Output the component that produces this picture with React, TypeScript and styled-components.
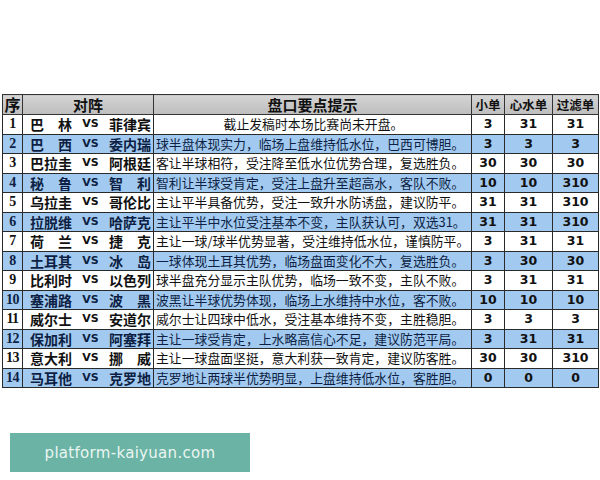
import * as React from 'react';
import styled, { createGlobalStyle } from 'styled-components';

const GlobalStyle = createGlobalStyle`
  html, body {
    margin: 0;
    padding: 0;
    background: #ffffff;
  }
`;

interface IMatch {
  home: string;
  away: string;
  tip: string;
  small: string;
  heart: string;
  filter: string;
}

const Matches: IMatch[] = [
  { home: '巴林', away: '菲律宾', tip: '截止发稿时本场比赛尚未开盘。', small: '3', heart: '31', filter: '31' },
  { home: '巴西', away: '委内瑞', tip: '球半盘体现实力，临场上盘维持低水位，巴西可博胆。', small: '3', heart: '3', filter: '3' },
  { home: '巴拉圭', away: '阿根廷', tip: '客让半球相符，受注降至低水位优势合理，复选胜负。', small: '30', heart: '30', filter: '30' },
  { home: '秘鲁', away: '智利', tip: '智利让半球受肯定，受注上盘升至超高水，客队不败。', small: '10', heart: '10', filter: '310' },
  { home: '乌拉圭', away: '哥伦比', tip: '主让平半具备优势，受注一致升水防诱盘，建议防平。', small: '31', heart: '31', filter: '310' },
  { home: '拉脱维', away: '哈萨克', tip: '主让平半中水位受注基本不变，主队获认可，双选31。', small: '31', heart: '31', filter: '310' },
  { home: '荷兰', away: '捷克', tip: '主让一球/球半优势显著，受注维持低水位，谨慎防平。', small: '3', heart: '31', filter: '31' },
  { home: '土耳其', away: '冰岛', tip: '一球体现土耳其优势，临场盘面变化不大，复选胜负。', small: '3', heart: '30', filter: '30' },
  { home: '比利时', away: '以色列', tip: '球半盘充分显示主队优势，临场一致不变，主队不败。', small: '3', heart: '31', filter: '31' },
  { home: '塞浦路', away: '波黑', tip: '波黑让半球优势体现，临场上水维持中水位，客不败。', small: '10', heart: '10', filter: '10' },
  { home: '威尔士', away: '安道尔', tip: '威尔士让四球中低水，受注基本维持不变，主胜稳胆。', small: '3', heart: '3', filter: '3' },
  { home: '保加利', away: '阿塞拜', tip: '主让一球受肯定，上水略高信心不足，建议防范平局。', small: '3', heart: '31', filter: '31' },
  { home: '意大利', away: '挪威', tip: '主让一球盘面坚挺，意大利获一致肯定，建议防客胜。', small: '30', heart: '30', filter: '310' },
  { home: '马耳他', away: '克罗地', tip: '克罗地让两球半优势明显，上盘维持低水位，客胜胆。', small: '0', heart: '0', filter: '0' },
];

const App: React.FunctionComponent = () => {
  return (
    <Page>
      <GlobalStyle />
      <Table>
        <colgroup>
          <col style={{ width: 20 }} />
          <col style={{ width: 131 }} />
          <col style={{ width: 318 }} />
          <col style={{ width: 33 }} />
          <col style={{ width: 48 }} />
          <col style={{ width: 46 }} />
        </colgroup>
        <thead>
          <tr>
            <HeadCell $size={16}>序</HeadCell>
            <HeadCell $size={15}>对阵</HeadCell>
            <HeadCell $size={15}>盘口要点提示</HeadCell>
            <HeadCell $size={12.5}>小单</HeadCell>
            <HeadCell $size={12.5}>心水单</HeadCell>
            <HeadCell $size={12.5}>过滤单</HeadCell>
          </tr>
        </thead>
        <tbody>
          {Matches.map((m, i) => (
            <Row key={i} $blue={i % 2 === 1}>
              <IndexCell>{i + 1}</IndexCell>
              <TeamCell>
                <Teams>
                  <TeamName>{m.home}</TeamName>
                  <Vs>VS</Vs>
                  <TeamName>{m.away}</TeamName>
                </Teams>
              </TeamCell>
              <TipCell $center={i === 0}>{m.tip}</TipCell>
              <NumCell>{m.small}</NumCell>
              <NumCell>{m.heart}</NumCell>
              <NumCell>{m.filter}</NumCell>
            </Row>
          ))}
        </tbody>
      </Table>
      <SiteBadge>platform-kaiyuan.com</SiteBadge>
    </Page>
  );
};

export default App;

const Page = styled.div`
  width: 600px;
  height: 480px;
  box-sizing: border-box;
  padding: 94px 0 0 2px;
  display: flex;
  flex-direction: column;
  background: #ffffff;
  overflow: hidden;
`;

const Table = styled.table`
  width: 596px;
  table-layout: fixed;
  border-collapse: collapse;
  border: 1px solid #222;
  color: #111;
`;

const HeadCell = styled.th<{ $size: number }>`
  height: 19px;
  padding: 0;
  border: 1px solid #333;
  background: linear-gradient(#d4d4d4, #bdbdbd);
  font-family: "Noto Sans CJK SC", sans-serif;
  font-weight: 700;
  font-size: ${p => p.$size}px;
  line-height: 19px;
  text-align: center;
  color: #111;
  white-space: nowrap;
`;

const Row = styled.tr<{ $blue?: boolean }>`
  background: ${p => (p.$blue ? '#a2c9ef' : '#ffffff')};
  color: ${p => (p.$blue ? '#0d1f44' : '#111')};

  td {
    height: 18.5px;
    padding: 0;
    border: 1px solid #2a2a2a;
    white-space: nowrap;
    overflow: hidden;
  }
`;

const IndexCell = styled.td`
  text-align: center;
  font-family: "Liberation Serif", serif;
  font-weight: 700;
  font-size: 14px;
  line-height: 18px;
  letter-spacing: -0.5px;
`;

const TeamCell = styled.td``;

const Teams = styled.div`
  display: flex;
  align-items: center;
  padding-left: 7px;
  font-family: "Noto Sans CJK SC", sans-serif;
  font-weight: 700;
  font-size: 14px;
  line-height: 18px;
`;

const TeamName = styled.span`
  width: 42px;
  display: inline-block;
  text-align: justify;
  text-align-last: justify;
`;

const Vs = styled.span`
  width: 37px;
  text-align: center;
  font-family: "DejaVu Sans", sans-serif;
  font-size: 11px;
  font-weight: 700;
`;

const TipCell = styled.td<{ $center?: boolean }>`
  padding-left: 2px !important;
  text-align: ${p => (p.$center ? 'center' : 'left')};
  font-family: "Noto Sans CJK SC", sans-serif;
  font-size: 12.85px;
  line-height: 18px;
`;

const NumCell = styled.td`
  text-align: center;
  font-family: "DejaVu Sans", sans-serif;
  font-weight: 700;
  font-size: 12.5px;
  line-height: 18px;
  color: #111;
`;

const SiteBadge = styled.div`
  margin: 45px 0 0 8px;
  width: 240px;
  height: 39px;
  display: flex;
  align-items: center;
  justify-content: center;
  background: #6bb3a4;
  color: #eaf6f2;
  font-family: "DejaVu Sans", sans-serif;
  font-size: 15px;
  letter-spacing: 0.3px;
`;
